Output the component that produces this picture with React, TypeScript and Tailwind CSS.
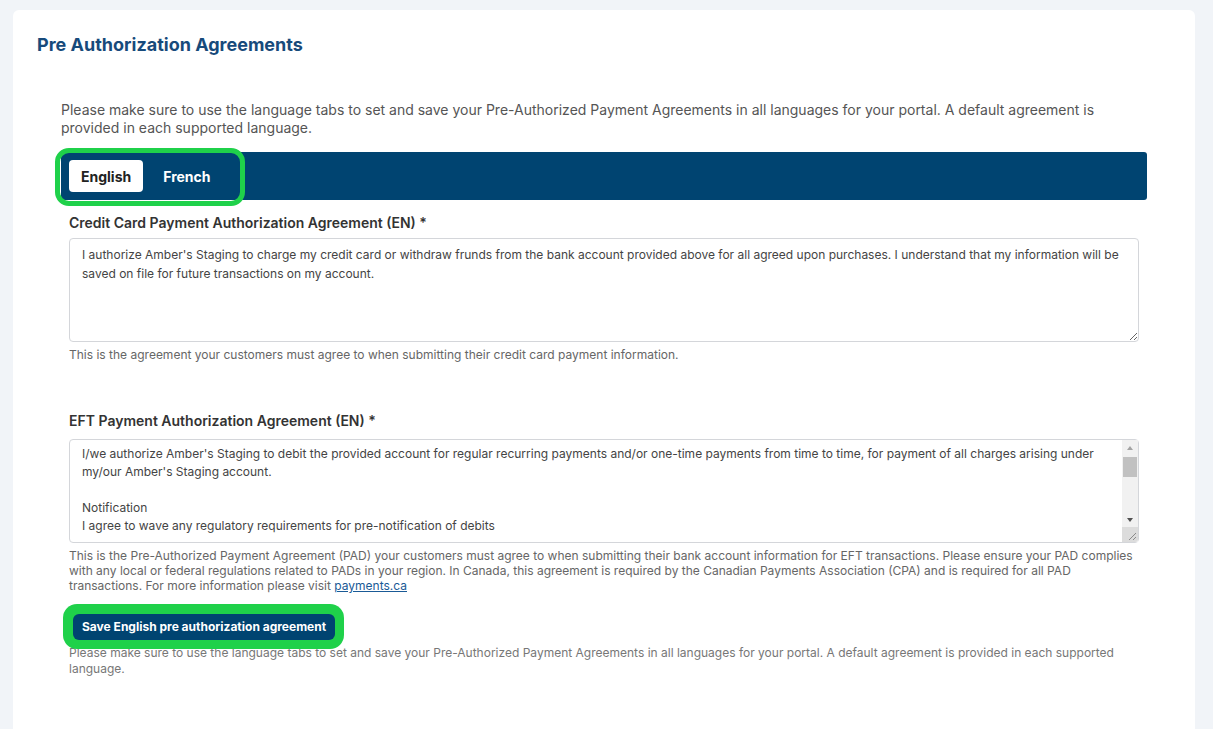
import React from 'react';

const creditText =
  "I authorize Amber's Staging to charge my credit card or withdraw frunds from the bank account provided above for all agreed upon purchases. I understand that my information will be saved on file for future transactions on my account.";

const eftText = `I/we authorize Amber's Staging to debit the provided account for regular recurring payments and/or one-time payments from time to time, for payment of all charges arising under my/our Amber's Staging account.

Notification
I agree to wave any regulatory requirements for pre-notification of debits

Cancellation
This authorization may be cancelled at any time upon notice being provided by me/us, either in writing or orally, with proper authorization to verify my/our identity.

Recourse
I/we have certain recourse rights if any debit does not comply with this agreement.`;

const FakeScrollbar: React.FC = () => (
  <div className="pointer-events-none absolute bottom-[1px] right-[1px] top-[1px] flex w-[16px] flex-col bg-[#f1f1f1]">
    <div className="flex h-[15px] items-center justify-center">
      <div className="h-0 w-0 border-x-[3.5px] border-b-[4px] border-x-transparent border-b-[#a3a3a3]"></div>
    </div>
    <div className="mx-[1px] mt-[2px] h-[20px] bg-[#c1c1c1]"></div>
    <div className="flex-1"></div>
    <div className="flex h-[15px] items-center justify-center">
      <div className="h-0 w-0 border-x-[3.5px] border-t-[4px] border-x-transparent border-t-[#505050]"></div>
    </div>
    <div className="flex h-[15px] items-end justify-end rounded-br-[3px] bg-[#dcdcdc]">
      <svg width="10" height="10" viewBox="0 0 10 10" className="mb-[1px] mr-[1px]">
        <path d="M9 2 L2 9 M9 6 L6 9" stroke="#8a8a8a" strokeWidth="1" fill="none" />
      </svg>
    </div>
  </div>
);

const App: React.FC = () => {
  return (
    <div className="min-h-[729px] bg-[#f1f4f8] pl-[13px] pr-[18px] pt-[10px] font-['Inter',sans-serif] text-[#444]">
      <div className="min-h-[719px] rounded-t-[6px] bg-white px-[24px] pt-[21px]">
        <h1 className="text-[18px] font-bold leading-[28px] text-[#174a7b]">Pre Authorization Agreements</h1>

        <div className="mx-[24px] mt-[42px]">
          <p className="text-[14px] leading-[18px] text-[#555]">
            Please make sure to use the language tabs to set and save your Pre-Authorized Payment Agreements in all languages for your portal. A default agreement is provided in each supported language.
          </p>

          {/* language tabs */}
          <div className="mt-[15px] flex h-[48px] items-center rounded-[3px] bg-[#004471] px-[8px]">
            <div className="relative flex h-[32px] items-center">
              <div className="pointer-events-none absolute -left-[14px] -right-[14px] -top-[12px] -bottom-[14px] rounded-[14px] border-[5px] border-[#1fd14a]"></div>
              <button className="h-[32px] rounded-[4px] bg-white px-[12px] text-[14px] font-bold text-[#222]">English</button>
              <button className="h-[32px] px-[20px] text-[14px] font-bold text-white">French</button>
            </div>
          </div>

          <div className="px-[8px]">
            <label className="mt-[13px] block text-[14px] font-semibold leading-[20px] text-[#333]">
              Credit Card Payment Authorization Agreement (EN) *
            </label>
            <textarea
              defaultValue={creditText}
              className="mt-[5px] block h-[104px] w-full rounded-[4px] border border-[#d4d6da] px-[12px] py-[6px] text-[12px] leading-[19px] text-[#444] outline-none"
            />
            <p className="mt-[5px] text-[12px] leading-[16px] text-[#666]">
              This is the agreement your customers must agree to when submitting their credit card payment information.
            </p>

            <label className="mt-[48px] block text-[14px] font-semibold leading-[20px] text-[#333]">
              EFT Payment Authorization Agreement (EN) *
            </label>
            <div className="relative mt-[8px]">
              <textarea
                defaultValue={eftText}
                className="block h-[104px] w-full resize-none overflow-hidden rounded-[4px] border border-[#d4d6da] py-[5px] pl-[12px] pr-[28px] text-[12px] leading-[18px] text-[#444] outline-none"
              />
              <FakeScrollbar />
            </div>
            <p className="mt-[5px] text-[12px] leading-[15px] text-[#666]">
              This is the Pre-Authorized Payment Agreement (PAD) your customers must agree to when submitting their bank account information for EFT transactions. Please ensure your PAD complies with any local or federal regulations related to PADs in your region. In Canada, this agreement is required by the Canadian Payments Association (CPA) and is required for all PAD transactions. For more information please visit{' '}
              <a href="#" className="text-[#1a5a96] underline">payments.ca</a>
            </p>

            <div className="relative ml-[4px] mt-[20px] inline-block">
              <div className="pointer-events-none absolute -left-[10px] -right-[9px] -top-[9px] -bottom-[9px] rounded-[14px] bg-[#1fd14a]"></div>
              <button className="relative h-[26px] rounded-[6px] bg-[#004471] px-[9px] text-[12px] font-bold text-white">
                Save English pre authorization agreement
              </button>
            </div>
            <p className="mt-[5px] text-[12px] leading-[16px] text-[#777]">
              Please make sure to use the language tabs to set and save your Pre-Authorized Payment Agreements in all languages for your portal. A default agreement is provided in each supported language.
            </p>
          </div>
        </div>
      </div>
    </div>
  );
};

export default App;
